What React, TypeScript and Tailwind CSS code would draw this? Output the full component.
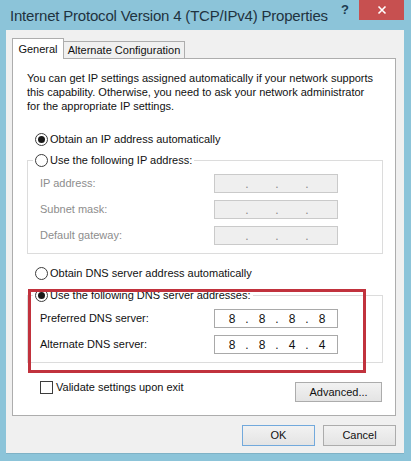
import { Fragment } from "react";

const Radio = ({ checked }: { checked?: boolean }) => (
  <span className="flex h-[13px] w-[13px] shrink-0 items-center justify-center rounded-full border border-[#3c3c3c] bg-white">
    {checked && <span className="h-[7px] w-[7px] rounded-full bg-[#1a1a1a]" />}
  </span>
);

const IpField = ({ parts, disabled }: { parts: string[]; disabled?: boolean }) => (
  <div
    className={
      disabled
        ? "flex h-[19px] w-[124px] items-center border border-[#cacaca] bg-[#efefef] pl-[4px] text-[12px] text-[#8a8a8a]"
        : "flex h-[19px] w-[124px] items-center border border-[#a9a9a9] bg-white pl-[4px] text-[12px] text-[#111]"
    }
  >
    {parts.map((p, i) => (
      <Fragment key={i}>
        {i > 0 && <span className="w-[4px] text-center">.</span>}
        <span className="w-[26px] text-center">{p}</span>
      </Fragment>
    ))}
  </div>
);

const FieldRow = ({ label, parts, disabled }: { label: string; parts: string[]; disabled?: boolean }) => (
  <div className="flex h-[19px] items-center">
    <span className={disabled ? "w-[186px] pl-[12px] text-[#8d8d8d]" : "w-[186px] pl-[12px] text-[#111]"}>{label}</span>
    <IpField parts={parts} disabled={disabled} />
  </div>
);

const Button = ({ label, primary, className }: { label: string; primary?: boolean; className: string }) => (
  <button
    className={`${className} flex items-center justify-center border bg-gradient-to-b from-[#f2f2f2] to-[#e4e4e4] text-[11px] text-[#111] ${
      primary ? "border-[#72a9dc]" : "border-[#acacac]"
    }`}
  >
    {label}
  </button>
);

const App = () => {
  const empty = ["", "", "", ""];

  return (
    <div className="relative h-[461px] w-[411px] overflow-hidden bg-[#8cc4d9] font-['Liberation_Sans',Arial,sans-serif] text-[11px] text-[#111]">
      {/* Title bar */}
      <div className="flex h-[30px] items-start">
        <div className="flex-1 pl-[10px] pt-[6px] text-[15px] leading-[20px] tracking-[-0.2px] text-[#1f3340]">
          Internet Protocol Version 4 (TCP/IPv4) Properties
        </div>
        <div className="pr-[10px] pt-[2px] text-[13px] font-bold leading-[16px] text-[#1d3b50]">?</div>
        <div className="mr-[7px] flex h-[20px] w-[45px] items-center justify-center bg-[#c75050]">
          <svg width="10" height="10" viewBox="0 0 10 10">
            <path d="M1.5 1.5 L8.5 8.5 M8.5 1.5 L1.5 8.5" stroke="#fff" strokeWidth="1.6" />
          </svg>
        </div>
      </div>

      {/* Window body */}
      <div className="ml-[6px] mr-[7px] h-[424px] border-b border-[#7fb2c6] bg-[#f0f0f0] pl-[6px] pr-[8px] pt-[8px]">
        {/* Tabs */}
        <div className="flex h-[20px] items-end">
          <div className="relative z-10 -mb-[1px] flex h-[21px] w-[52px] items-center justify-center border-x border-t border-[#adadad] bg-white">
            General
          </div>
          <div className="flex h-[17px] w-[121px] items-center justify-center border-r border-t border-[#adadad] bg-[#f0f0f0]">
            Alternate Configuration
          </div>
        </div>

        {/* Tab panel */}
        <div className="h-[358px] border border-[#adadad] bg-white">
          <p className="ml-[14px] mt-[12px] leading-[14px]">
            You can get IP settings assigned automatically if your network supports
            <br />
            this capability. Otherwise, you need to ask your network administrator
            <br />
            for the appropriate IP settings.
          </p>

          <div className="mt-[16px] flex h-[20px] items-center gap-[2px] pl-[22px]">
            <Radio checked />
            <span>Obtain an IP address automatically</span>
          </div>

          <fieldset className="ml-[14px] mr-[12px] mt-[1px] border border-[#dcdcdc] pb-[8px]">
            <legend className="ml-[5px] px-[2px]">
              <span className="flex h-[20px] items-center gap-[2px]">
                <Radio />
                <span>Use the following IP address:</span>
              </span>
            </legend>
            <div className="flex flex-col gap-[7px] pt-[4px]">
              <FieldRow label="IP address:" parts={empty} disabled />
              <FieldRow label="Subnet mask:" parts={empty} disabled />
              <FieldRow label="Default gateway:" parts={empty} disabled />
            </div>
          </fieldset>

          <div className="mt-[9px] flex h-[20px] items-center gap-[2px] pl-[22px]">
            <Radio />
            <span>Obtain DNS server address automatically</span>
          </div>

          <fieldset className="ml-[14px] mr-[12px] mt-[2px] border border-[#dcdcdc] pb-[8px]">
            <legend className="ml-[5px] px-[2px]">
              <span className="flex h-[20px] items-center gap-[2px]">
                <Radio checked />
                <span>Use the following DNS server addresses:</span>
              </span>
            </legend>
            <div className="flex flex-col gap-[7px] pt-[4px]">
              <FieldRow label="Preferred DNS server:" parts={["8", "8", "8", "8"]} />
              <FieldRow label="Alternate DNS server:" parts={["8", "8", "4", "4"]} />
            </div>
          </fieldset>

          <div className="mt-[18px] flex items-start justify-between">
            <div className="ml-[27px] flex h-[13px] items-center gap-[3px]">
              <span className="h-[13px] w-[13px] border border-[#3c3c3c] bg-white" />
              <span>Validate settings upon exit</span>
            </div>
            <Button label="Advanced..." className="mr-[13px] mt-[1px] h-[20px] w-[87px]" />
          </div>
        </div>

        {/* Dialog buttons */}
        <div className="mt-[9px] flex justify-end gap-[8px]">
          <Button label="OK" primary className="h-[21px] w-[73px]" />
          <Button label="Cancel" className="h-[21px] w-[73px]" />
        </div>
      </div>

      {/* Highlight annotation */}
      <div className="pointer-events-none absolute left-[28px] top-[289px] h-[84px] w-[338px] border-[3px] border-[#c1323d]" />
    </div>
  );
};

export default App;
